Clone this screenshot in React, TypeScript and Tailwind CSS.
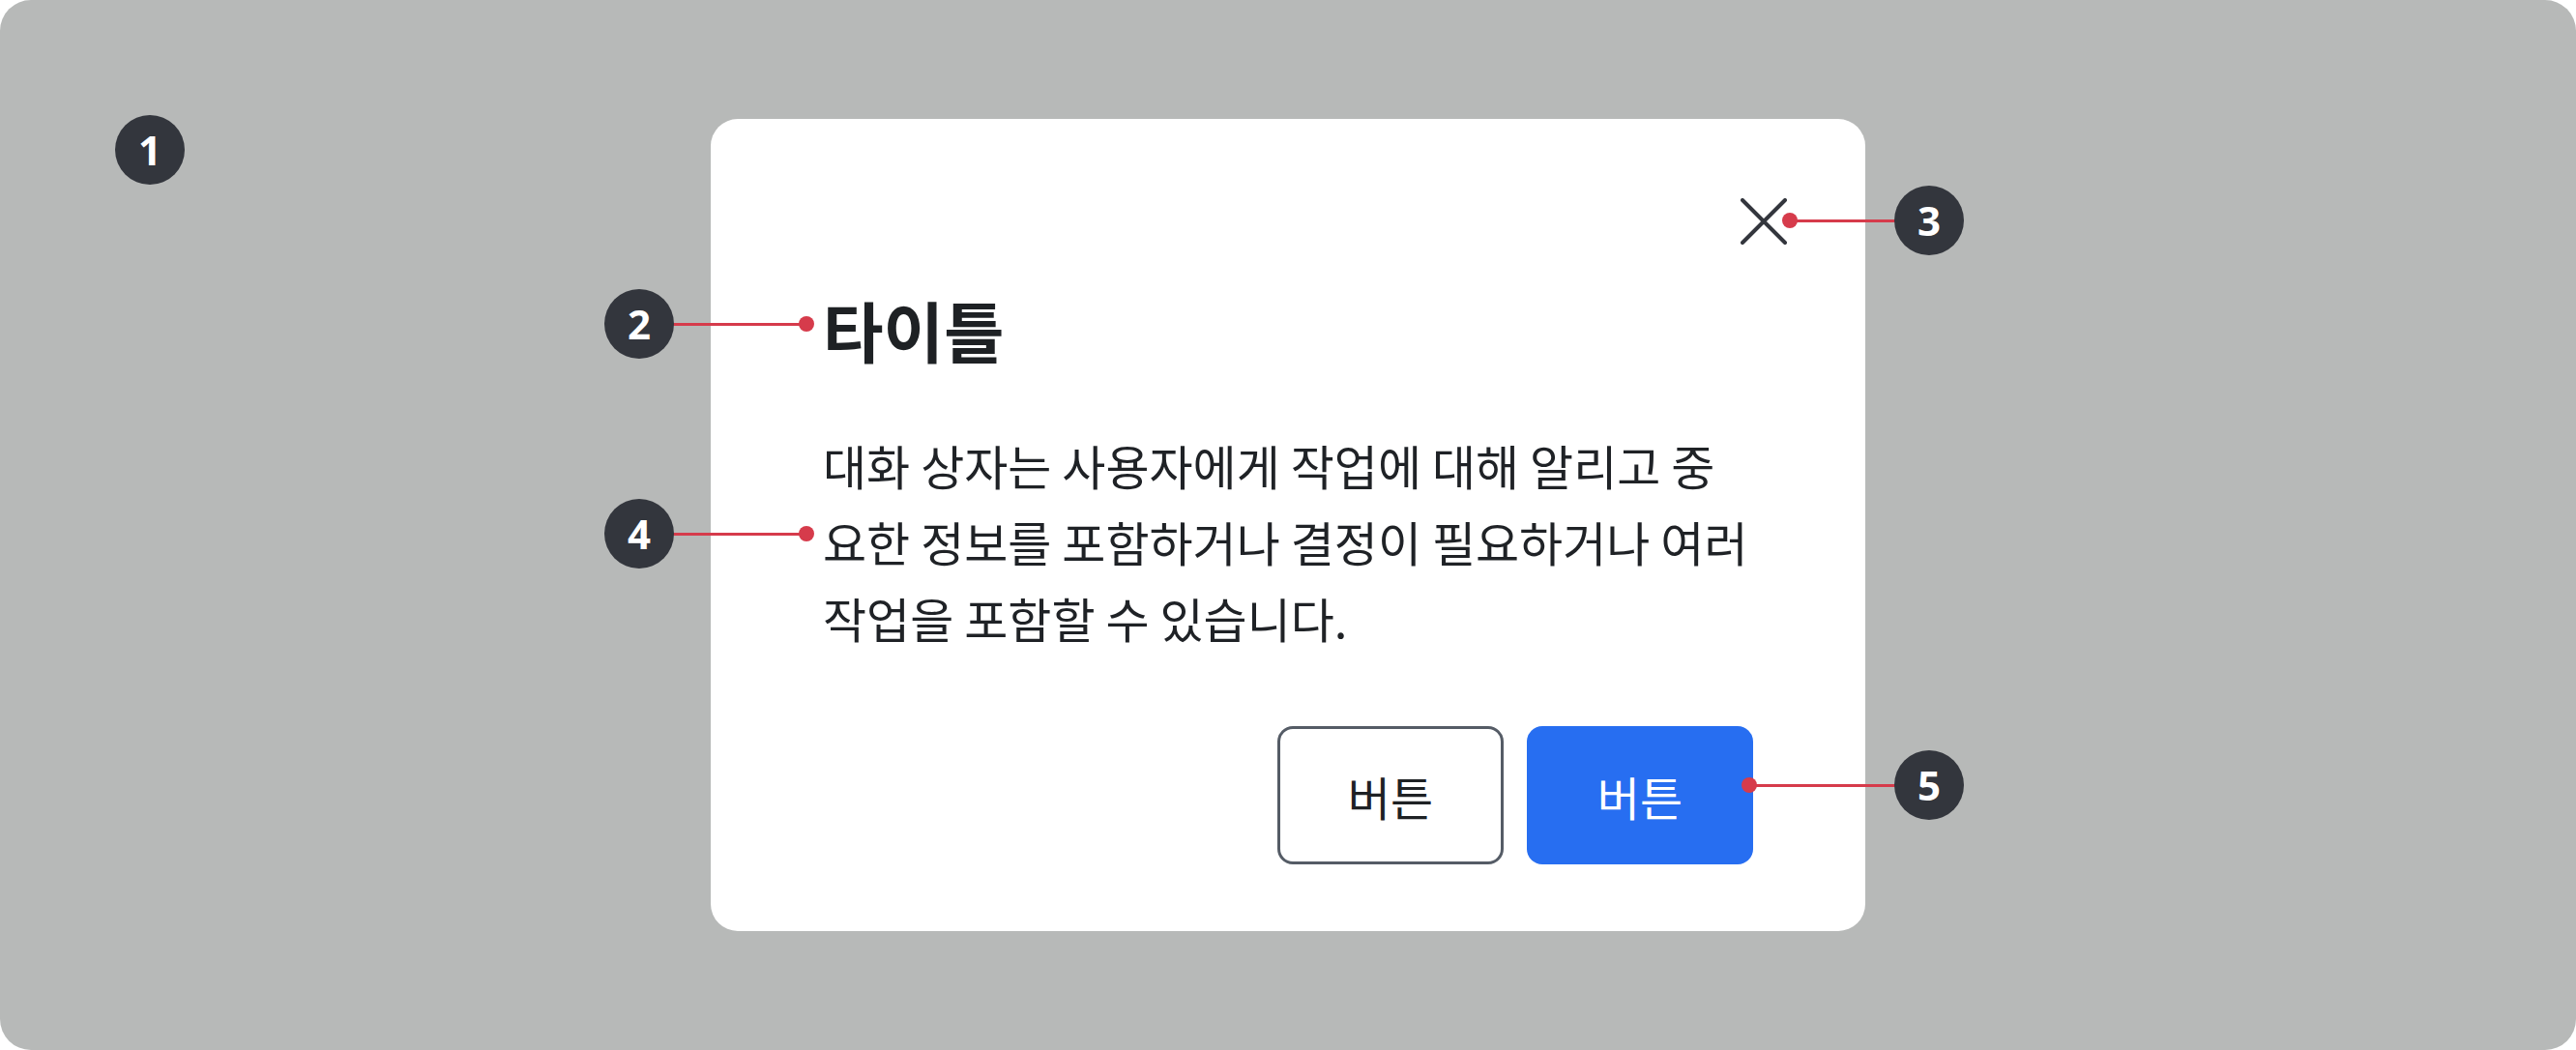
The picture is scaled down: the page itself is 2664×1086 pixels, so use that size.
import React from 'react';

const FONT = { fontFamily: '"Noto Sans CJK KR", "Noto Sans", sans-serif' };

type Marker = {
  n: number;
  cx: number;
  cy: number;
  dotX?: number;
};

const markers: Marker[] = [
  { n: 1, cx: 155, cy: 155 },
  { n: 2, cx: 661, cy: 335, dotX: 834 },
  { n: 3, cx: 1995, cy: 228, dotX: 1851 },
  { n: 4, cx: 661, cy: 552, dotX: 834 },
  { n: 5, cx: 1995, cy: 812, dotX: 1809 },
];

const Annotation: React.FC<{ m: Marker }> = ({ m }) => {
  const lineLeft = m.dotX !== undefined ? Math.min(m.dotX, m.cx) : 0;
  const lineWidth = m.dotX !== undefined ? Math.abs(m.cx - m.dotX) : 0;
  return (
    <>
      {m.dotX !== undefined && (
        <>
          <div
            className="absolute h-[3px] bg-[#d63b4b]"
            style={{ left: lineLeft, top: m.cy - 1, width: lineWidth }}
          />
          <div
            className="absolute h-4 w-4 rounded-full bg-[#d63b4b]"
            style={{ left: m.dotX - 8, top: m.cy - 8 }}
          />
        </>
      )}
      <div
        className="absolute flex h-[72px] w-[72px] items-center justify-center rounded-full bg-[#33363d] text-[42px] font-bold leading-none text-white"
        style={{ left: m.cx - 36, top: m.cy - 36, fontFamily: '"Noto Sans", sans-serif' }}
      >
        {m.n}
      </div>
    </>
  );
};

const App: React.FC = () => {
  return (
    <div className="h-[1086px] w-full bg-white" style={FONT}>
      <div className="relative flex h-full w-full items-center justify-center rounded-[32px] bg-[#b7b9b8]">
        {/* Dialog */}
        <div className="flex w-[1194px] flex-col rounded-[28px] bg-white px-[116px] pb-[69px] pt-[82px]">
          <div className="flex justify-end">
            <button className="mr-[-35px] h-12 w-12 text-[#33363d]">
              <svg width="48" height="48" viewBox="0 0 48 48" fill="none">
                <path d="M2 2L46 46M46 2L2 46" stroke="currentColor" strokeWidth="4" strokeLinecap="round" />
              </svg>
            </button>
          </div>

          <h2 className="mt-12 text-[68px] font-bold leading-[80px] text-[#1e2124]">타이틀</h2>

          <p className="mt-[60px] whitespace-nowrap text-[49px] leading-[79px] text-[#1f2226]">
            대화 상자는 사용자에게 작업에 대해 알리고 중<br />
            요한 정보를 포함하거나 결정이 필요하거나 여러<br />
            작업을 포함할 수 있습니다.
          </p>

          <div className="mt-[73px] flex justify-end gap-6">
            <button className="h-[143px] w-[234px] rounded-2xl border-[3px] border-[#555c66] bg-white text-[48px] text-[#1e2124]">
              버튼
            </button>
            <button className="h-[143px] w-[234px] rounded-2xl bg-[#276ef1] text-[48px] text-white">
              버튼
            </button>
          </div>
        </div>

        {/* Annotations */}
        {markers.map(m => (
          <Annotation key={m.n} m={m} />
        ))}
      </div>
    </div>
  );
};

export default App;
